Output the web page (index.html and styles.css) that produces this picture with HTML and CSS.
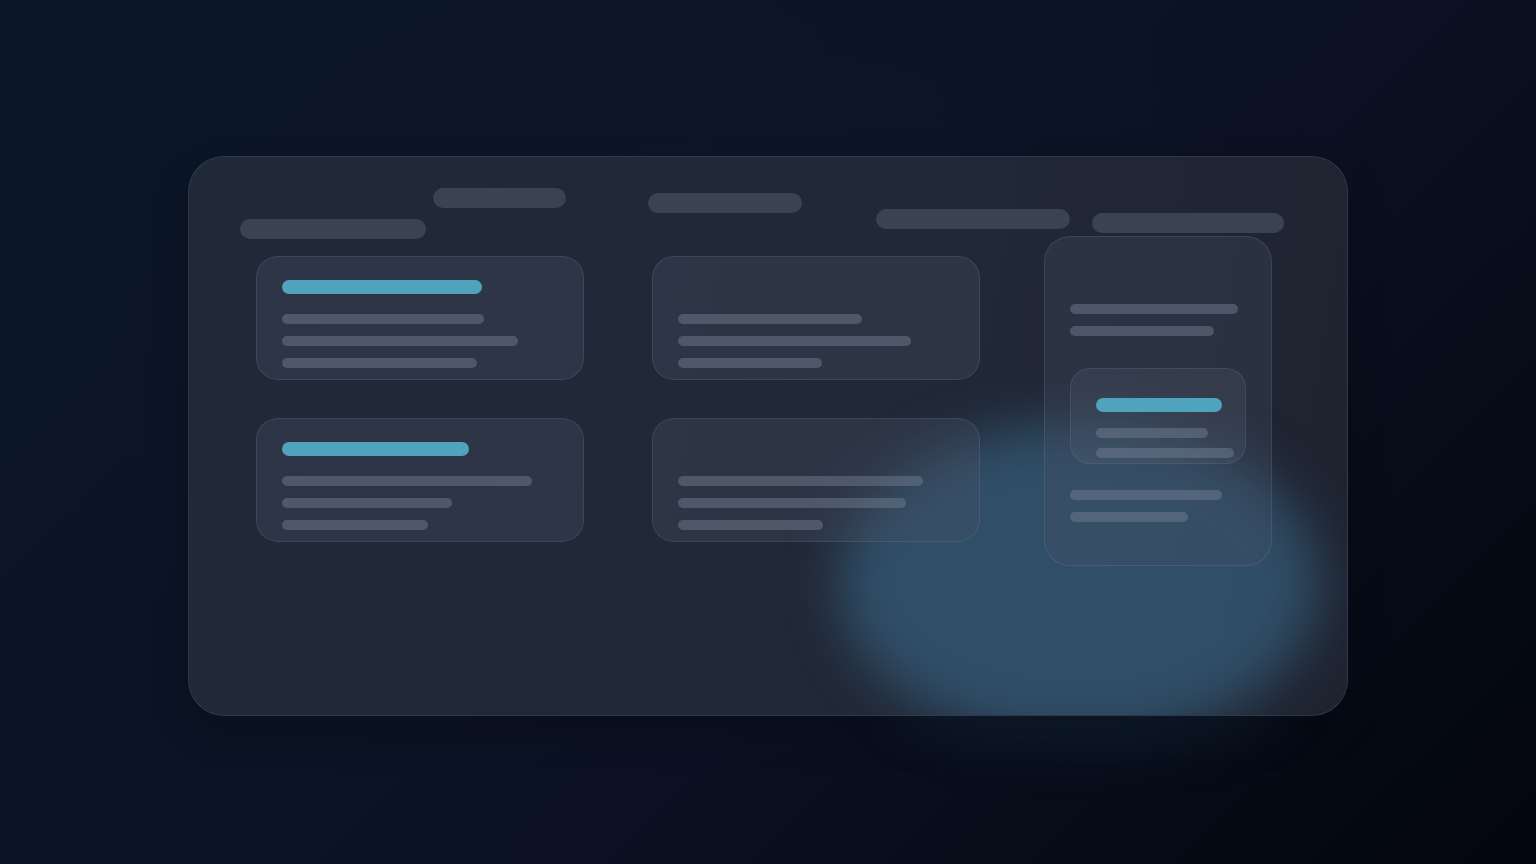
FILE: index.html
```html
<!DOCTYPE html>
<html lang="en">
<head>
<meta charset="utf-8">
<title>Skeleton board</title>
<link rel="stylesheet" href="styles.css">
</head>
<body>
<div class="stage">
  <div class="glow-under"></div>
  <section class="panel">
    <div class="blob"></div>
    <header class="head">
      <span class="pill p1"></span>
      <span class="pill p2"></span>
      <span class="pill p3"></span>
      <span class="pill p4"></span>
      <span class="pill p5"></span>
    </header>
    <div class="main">
      <div class="grid">
        <article class="card">
          <span class="accent" style="width:200px"></span>
          <div class="lines">
            <span class="line" style="width:202px"></span>
            <span class="line" style="width:236px"></span>
            <span class="line" style="width:195px"></span>
          </div>
        </article>
        <article class="card">
          <span class="accent ghost"></span>
          <div class="lines">
            <span class="line" style="width:184px"></span>
            <span class="line" style="width:233px"></span>
            <span class="line" style="width:144px"></span>
          </div>
        </article>
        <article class="card">
          <span class="accent" style="width:187px"></span>
          <div class="lines">
            <span class="line" style="width:250px"></span>
            <span class="line" style="width:170px"></span>
            <span class="line" style="width:146px"></span>
          </div>
        </article>
        <article class="card">
          <span class="accent ghost"></span>
          <div class="lines">
            <span class="line" style="width:245px"></span>
            <span class="line" style="width:228px"></span>
            <span class="line" style="width:145px"></span>
          </div>
        </article>
      </div>
      <aside class="tall">
        <div class="lines">
          <span class="line" style="width:168px"></span>
          <span class="line" style="width:144px"></span>
        </div>
        <div class="inner">
          <span class="accent" style="width:126px"></span>
          <div class="inner-lines">
            <span class="line" style="width:112px"></span>
            <span class="line" style="width:138px"></span>
          </div>
        </div>
        <div class="lines">
          <span class="line" style="width:152px"></span>
          <span class="line" style="width:118px"></span>
        </div>
      </aside>
    </div>
  </section>
</div>
</body>
</html>
```

FILE: styles.css
```css
html, body {
  margin: 0;
  padding: 0;
  height: 100%;
}

body {
  font-family: "Inter", "Liberation Sans", sans-serif;
  background:
    radial-gradient(ellipse 900px 600px at 48% 40%, rgba(18, 24, 44, 0.55), rgba(0, 0, 0, 0) 70%),
    linear-gradient(135deg, #0b1727 0%, #0b1425 35%, #0b1122 60%, #03060e 100%);
  overflow: hidden;
}

.stage {
  position: relative;
  width: 1160px;
  margin: 0 auto;
  padding-top: 156px;
}

.glow-under {
  position: absolute;
  left: 700px;
  top: 640px;
  width: 400px;
  height: 110px;
  border-radius: 50%;
  background: rgba(40, 80, 110, 0.22);
  filter: blur(24px);
}

.panel {
  position: relative;
  box-sizing: border-box;
  width: 1160px;
  height: 560px;
  border-radius: 36px;
  overflow: hidden;
  background: linear-gradient(100deg, rgba(33, 42, 58, 0.98) 0%, rgba(34, 41, 56, 0.98) 60%, rgba(31, 36, 49, 0.98) 100%);
  border: 1px solid rgba(120, 140, 170, 0.18);
  box-shadow: 0 16px 40px rgba(0, 0, 0, 0.2);
  padding-left: 51px;
}

.blob {
  position: absolute;
  left: 650px;
  top: 266px;
  width: 480px;
  height: 320px;
  border-radius: 50%;
  background: rgba(52, 90, 118, 0.78);
  filter: blur(26px);
  z-index: 0;
}

.head {
  position: relative;
  z-index: 1;
  display: flex;
  align-items: flex-start;
  height: 79px;
}

.pill {
  display: block;
  height: 20px;
  border-radius: 10px;
  background: #3a4351;
}

.p1 { width: 186px; margin-top: 62px; }
.p2 { width: 133px; margin-top: 31px; margin-left: 7px; }
.p3 { width: 154px; margin-top: 36px; margin-left: 82px; }
.p4 { width: 194px; margin-top: 52px; margin-left: 74px; }
.p5 { width: 192px; margin-top: 56px; margin-left: 22px; }

.main {
  position: relative;
  z-index: 1;
  display: flex;
  align-items: flex-start;
}

.grid {
  display: grid;
  grid-template-columns: 328px 328px;
  column-gap: 68px;
  row-gap: 38px;
  margin-top: 20px;
  margin-left: 16px;
}

.card {
  box-sizing: border-box;
  height: 124px;
  border-radius: 22px;
  background: rgba(70, 80, 100, 0.32);
  border: 1px solid rgba(150, 165, 190, 0.16);
  padding: 23px 25px 0;
  display: flex;
  flex-direction: column;
}

.accent {
  display: block;
  height: 14px;
  border-radius: 7px;
  background: #4fa3bc;
}

.accent.ghost {
  background: transparent;
}

.lines {
  display: flex;
  flex-direction: column;
  gap: 12px;
}

.card .lines {
  margin-top: 20px;
}

.line {
  display: block;
  height: 10px;
  border-radius: 5px;
  background: rgba(120, 130, 148, 0.45);
}

.tall {
  box-sizing: border-box;
  width: 228px;
  height: 330px;
  margin-left: 64px;
  border-radius: 26px;
  background: rgba(70, 80, 100, 0.3);
  border: 1px solid rgba(150, 165, 190, 0.16);
  padding: 67px 25px 0;
  display: flex;
  flex-direction: column;
}

.inner {
  box-sizing: border-box;
  width: 176px;
  height: 96px;
  margin-top: 32px;
  border-radius: 20px;
  background: rgba(90, 100, 120, 0.22);
  border: 1px solid rgba(150, 165, 190, 0.14);
  padding: 29px 0 0 25px;
  display: flex;
  flex-direction: column;
}

.inner-lines {
  display: flex;
  flex-direction: column;
  gap: 10px;
  margin-top: 16px;
}

.inner + .lines {
  margin-top: 26px;
}
```
